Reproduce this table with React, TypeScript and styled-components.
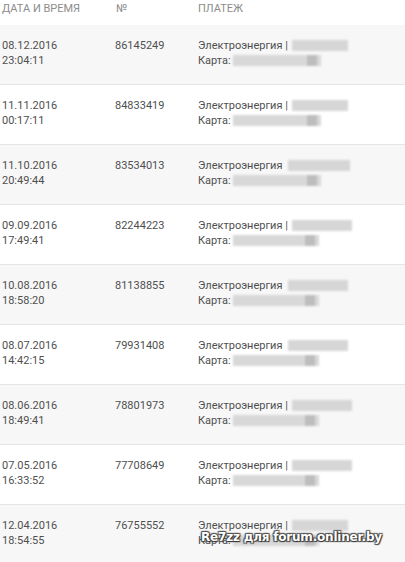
import React from "react";
import styled, { createGlobalStyle } from "styled-components";

const Global = createGlobalStyle`
  html, body { margin: 0; padding: 0; background: #fff; }
  body { font-family: Roboto, "Liberation Sans", sans-serif; }
`;

const Page = styled.div`
  position: relative;
  width: 405px;
  height: 562px;
  overflow: hidden;
  background: #fff;
`;

const Grid = styled.div`
  display: grid;
  grid-template-columns: 113px 83px 1fr;
  padding-left: 2px;
`;

const Header = styled(Grid)`
  height: 25px;
  box-sizing: border-box;
  padding-top: 1px;
  font-size: 11px;
  line-height: 15px;
  color: #8c8c8c;
  text-transform: uppercase;
`;

const HeadCell = styled.div<{ $dx?: number }>`
  padding-left: ${(p) => p.$dx ?? 0}px;
`;

const Row = styled(Grid)<{ $odd: boolean }>`
  height: 60px;
  box-sizing: border-box;
  padding-top: 13px;
  background: ${(p) => (p.$odd ? "#f7f7f7" : "#fff")};
  border-bottom: 1px solid #e5e5e5;
  font-size: 11px;
  line-height: 15px;
  color: #4f4f4f;
`;

const Cell = styled.div`
  display: flex;
  flex-direction: column;
`;

const Line = styled.div`
  display: flex;
  align-items: center;
  white-space: nowrap;
`;

const Redact = styled.span<{ $w: number; $tone: string; $gap: number }>`
  display: inline-block;
  position: relative;
  width: ${(p) => p.$w}px;
  height: 11px;
  margin-left: ${(p) => p.$gap}px;
  background: ${(p) => p.$tone};
  filter: blur(1.2px);
`;

const Dark = styled.span<{ $x: number }>`
  position: absolute;
  left: ${(p) => p.$x}px;
  top: 0;
  width: 10px;
  height: 11px;
  background: #bdbdbd;
`;

const Watermark = styled.div`
  position: absolute;
  left: 201px;
  top: 530px;
  font-family: "DejaVu Sans", sans-serif;
  font-weight: bold;
  font-size: 12px;
  letter-spacing: -0.2px;
  color: #fff;
  text-shadow: 0 0 1px #333, 1px 1px 1px #333, -1px -1px 1px #555, 1px -1px 1px #555, -1px 1px 1px #555;
  white-space: nowrap;
`;

type Item = { d: string; t: string; n: string; w1: number; w2: number; sep: boolean };

const data: Item[] = [
  { d: "08.12.2016", t: "23:04:11", n: "86145249", w1: 56, w2: 88, sep: true },
  { d: "11.11.2016", t: "00:17:11", n: "84833419", w1: 56, w2: 88, sep: true },
  { d: "11.10.2016", t: "20:49:44", n: "83534013", w1: 62, w2: 88, sep: false },
  { d: "09.09.2016", t: "17:49:41", n: "82244223", w1: 60, w2: 86, sep: true },
  { d: "10.08.2016", t: "18:58:20", n: "81138855", w1: 60, w2: 86, sep: false },
  { d: "08.07.2016", t: "14:42:15", n: "79931408", w1: 60, w2: 86, sep: false },
  { d: "08.06.2016", t: "18:49:41", n: "78801973", w1: 60, w2: 86, sep: true },
  { d: "07.05.2016", t: "16:33:52", n: "77708649", w1: 60, w2: 86, sep: true },
  { d: "12.04.2016", t: "18:54:55", n: "76755552", w1: 56, w2: 86, sep: true },
];

export default function App() {
  return (
    <Page>
      <Global />
      <Header>
        <HeadCell>Дата и время</HeadCell>
        <HeadCell $dx={1}>№</HeadCell>
        <HeadCell>Платеж</HeadCell>
      </Header>
      {data.map((r, i) => (
        <Row key={i} $odd={i % 2 === 0}>
          <Cell>
            <span>{r.d}</span>
            <span>{r.t}</span>
          </Cell>
          <Cell>
            <span>{r.n}</span>
          </Cell>
          <Cell>
            <Line>
              Электроэнергия{r.sep ? " |" : ""}
              <Redact $w={r.w1} $tone="#d6d6d6" $gap={r.sep ? 4 : 6} />
            </Line>
            <Line>
              Карта:
              <Redact $w={r.w2} $tone="#d8d8d8" $gap={2}>
                <Dark $x={r.w2 - 14} />
              </Redact>
            </Line>
          </Cell>
        </Row>
      ))}
      <Watermark>Re7zz для forum.onliner.by</Watermark>
    </Page>
  );
}
